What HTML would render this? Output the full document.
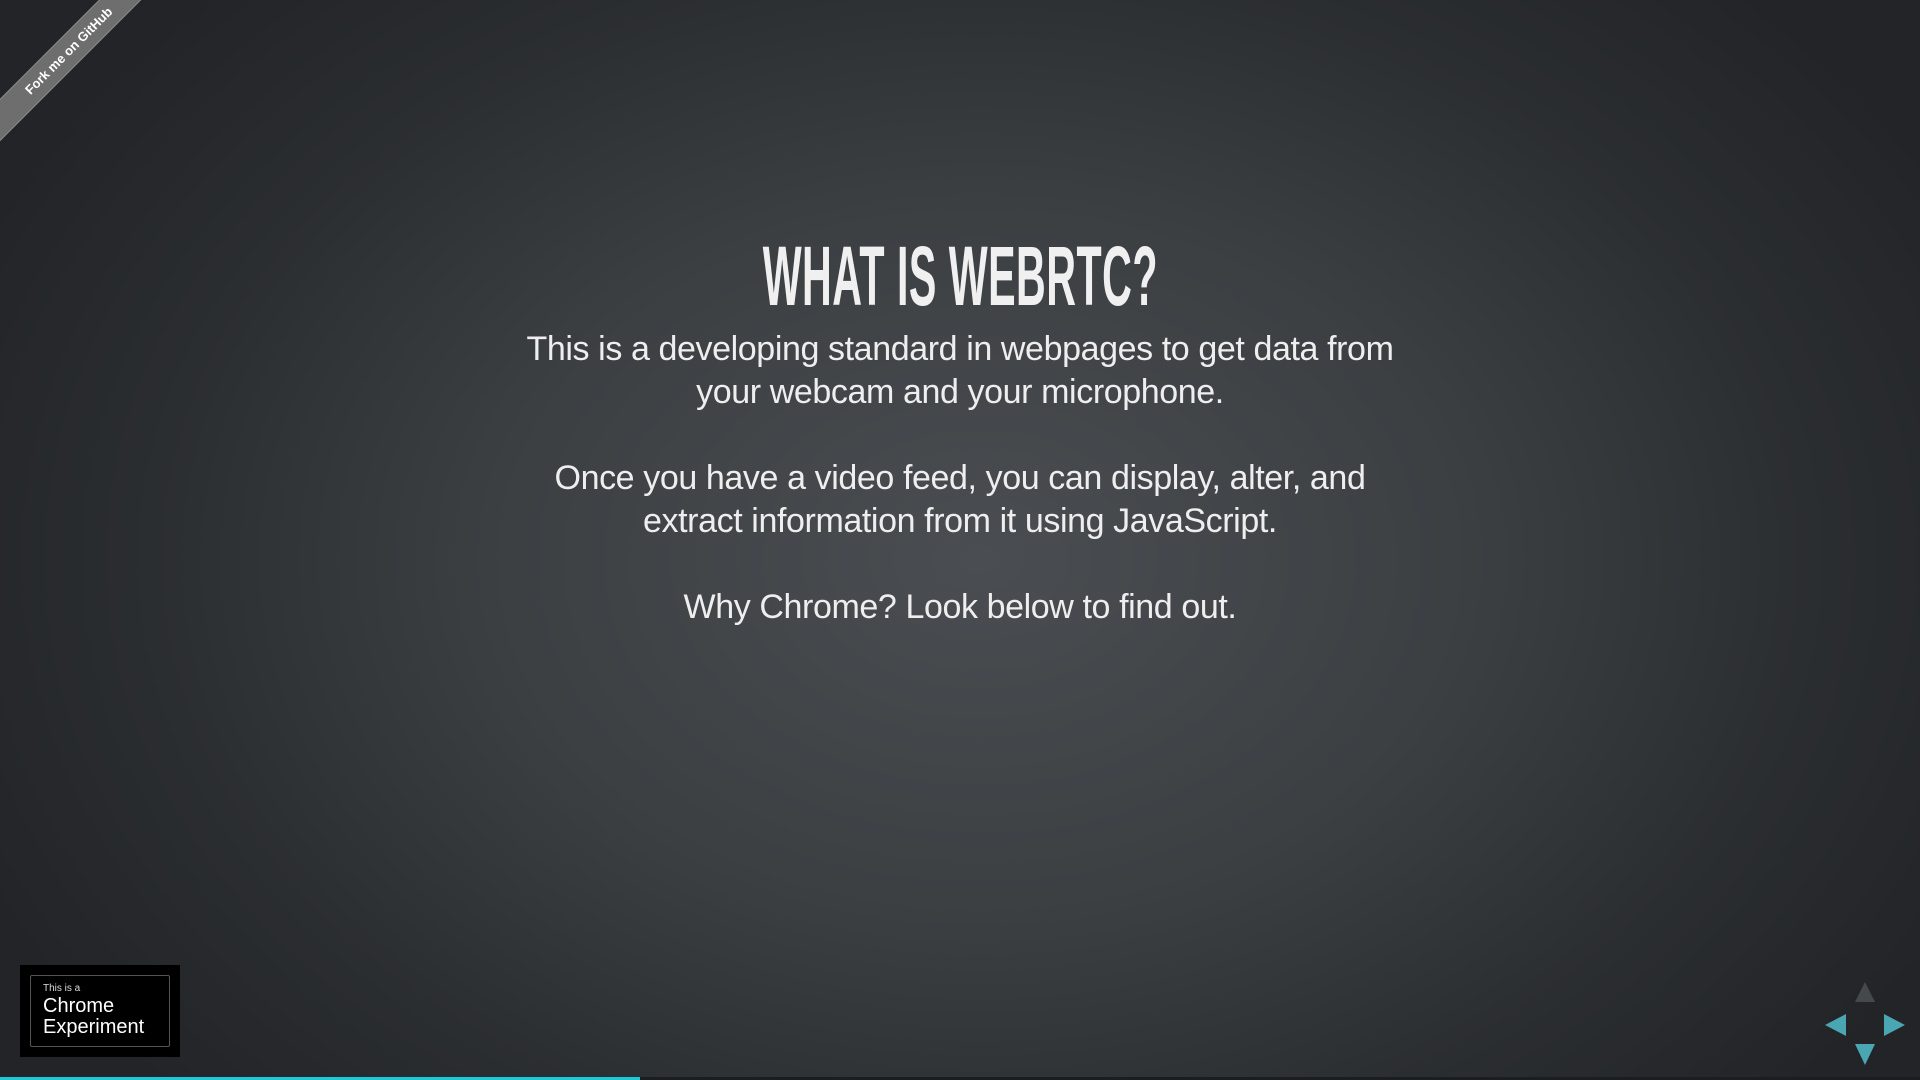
<!DOCTYPE html>
<html><head><meta charset="utf-8"><style>
html,body{margin:0;padding:0;width:1920px;height:1080px;overflow:hidden;}
body{background:radial-gradient(ellipse 1100px 800px at 980px 560px,#4a4e52 0%,#3b3f42 45%,#2b2e31 75%,#222427 100%);font-family:"Liberation Sans",sans-serif;position:relative;}
.title{position:absolute;top:228px;left:0;width:1920px;text-align:center;}
.title span{display:inline-block;font-family:"Liberation Sans Narrow","Liberation Sans",sans-serif;font-weight:bold;font-size:84px;color:#f0f0f0;transform:scaleX(0.49);transform-origin:center;letter-spacing:1px;}
.txt{position:absolute;left:0;width:1920px;text-align:center;color:#eeeeee;font-size:34px;letter-spacing:-0.4px;line-height:43px;}
.rib{position:absolute;left:-46px;top:36px;width:230px;height:28px;background:#6e6e6e;transform:rotate(-45deg);color:#fff;font-size:13px;font-weight:bold;text-align:center;line-height:28px;border-top:1px solid #888;border-bottom:1px solid #888;}
.ce{position:absolute;left:20px;top:965px;width:160px;height:92px;background:#000;}
.ce div{position:absolute;left:10px;top:10px;width:138px;height:70px;border:1px solid #555;border-radius:2px;color:#fff;}
.bar{position:absolute;left:0;top:1077px;width:640px;height:3px;background:#1ec8d8;}
.bar2{position:absolute;left:640px;top:1077px;width:1280px;height:3px;background:#1c1d1f;}
</style></head><body>
<div class="rib">Fork me on GitHub</div>
<div class="title"><span>WHAT IS WEBRTC?</span></div>
<div class="txt" style="top:328px">This is a developing standard in webpages to get data from<br>your webcam and your microphone.</div>
<div class="txt" style="top:457px">Once you have a video feed, you can display, alter, and<br>extract information from it using JavaScript.</div>
<div class="txt" style="top:586px">Why Chrome? Look below to find out.</div>
<div class="ce"><div>
<span style="position:absolute;left:12px;top:7px;font-size:10px;color:#ddd">This is a</span>
<span style="position:absolute;left:12px;top:20px;font-size:20px;line-height:21px">Chrome<br>Experiment</span>
</div></div>
<svg style="position:absolute;left:1820px;top:980px" width="90" height="85">
<polygon points="45,2 35,22 55,22" fill="#45494c"/>
<polygon points="5,45 26,34 26,56" fill="#4aa6b2"/>
<polygon points="85,45 64,34 64,56" fill="#4aa6b2"/>
<polygon points="45,85 35,64 55,64" fill="#4aa6b2"/>
</svg>
<div class="bar"></div><div class="bar2"></div>
</body></html>
